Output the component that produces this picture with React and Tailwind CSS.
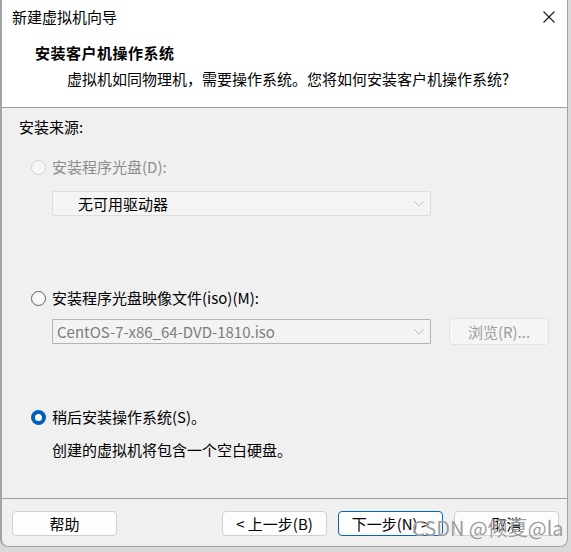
import React from 'react';

function Radio({ state }) {
  if (state === 'checked') {
    return (
      <span className="w-[15px] h-[15px] rounded-full bg-[#005fb8] flex items-center justify-center shrink-0">
        <span className="w-[7px] h-[7px] rounded-full bg-white" />
      </span>
    );
  }
  if (state === 'disabled') {
    return <span className="w-[15px] h-[15px] rounded-full border border-[#d0d0d0] bg-[#f7f7f7] shrink-0" />;
  }
  return <span className="w-[15px] h-[15px] rounded-full border border-[#5d5d5d] bg-[#f7f7f7] shrink-0" />;
}

function Chevron({ color = '#a8a8a8' }) {
  return (
    <svg width="10" height="6" viewBox="0 0 10 6" fill="none">
      <path d="M0.5 0.5 L5 5 L9.5 0.5" stroke={color} strokeWidth="1" />
    </svg>
  );
}

function Button({ children, primary }) {
  return (
    <button
      className={
        primary
          ? 'w-[105px] h-[25px] rounded-[4px] border border-[#0067c0] bg-[#fdfdfd] text-[15px] leading-[20px] text-black'
          : 'w-[105px] h-[25px] rounded-[4px] border border-[#d0d0d0] bg-[#fdfdfd] text-[15px] leading-[20px] text-black'
      }
    >
      {children}
    </button>
  );
}

export default function App() {
  return (
    <div className="relative w-[571px] h-[552px] bg-[#d9d9d9] overflow-hidden font-['Noto_Sans_CJK_SC',sans-serif]">
      <div className="w-[568px] h-[547px] flex flex-col bg-[#f0f0f0] border-l-2 border-r border-b border-[#a3a3a3] rounded-bl-[8px] rounded-br-[8px] overflow-hidden">
        {/* title bar */}
        <div className="h-[33px] bg-white flex items-center justify-between pl-[10px] pr-[12px]">
          <span className="text-[15px] leading-[20px] text-black">新建虚拟机向导</span>
          <svg width="12" height="12" viewBox="0 0 12 12" fill="none">
            <path d="M0.5 0.5 L11.5 11.5 M11.5 0.5 L0.5 11.5" stroke="#1a1a1a" strokeWidth="1.1" />
          </svg>
        </div>

        {/* header */}
        <div className="bg-white pt-[10px] pb-[18px] border-b border-[#a0a0a0] flex flex-col gap-[6px]">
          <div className="pl-[33px] text-[15px] leading-[20px] font-bold text-black tracking-[0.5px]">安装客户机操作系统</div>
          <div className="pl-[65px] text-[15px] leading-[20px] text-black">
            虚拟机如同物理机，需要操作系统。您将如何安装客户机操作系统?
          </div>
        </div>

        {/* body */}
        <div className="flex-1 flex flex-col pt-[9px] text-[15px] leading-[20px]">
          <div className="pl-[17px] text-black">安装来源:</div>

          <div className="mt-[20px] pl-[29px] flex items-center gap-[6px] text-[#8c8c8c]">
            <Radio state="disabled" />
            <span>安装程序光盘(D):</span>
          </div>
          <div className="mt-[14px] ml-[50px] w-[379px] h-[25px] border border-[#dedede] bg-[#f4f4f4] rounded-[2px] flex items-center justify-between pl-[25px] pr-[6px]">
            <span className="text-black">无可用驱动器</span>
            <Chevron color="#c0c0c0" />
          </div>

          <div className="mt-[72px] pl-[29px] flex items-center gap-[6px] text-black">
            <Radio state="off" />
            <span>安装程序光盘映像文件(iso)(M):</span>
          </div>
          <div className="mt-[10px] ml-[50px] flex items-center gap-[18px]">
            <div className="w-[379px] h-[25px] border border-[#b4b4b4] bg-[#f3f3f3] rounded-[1px] flex items-center justify-between pl-[4px] pr-[6px]">
              <span className="text-[#7c7c7c]">CentOS-7-x86_64-DVD-1810.iso</span>
              <Chevron color="#b8b8b8" />
            </div>
            <div className="w-[100px] h-[27px] border border-[#e2e2e2] bg-[#f5f5f5] rounded-[4px] flex items-center justify-center text-[#9c9c9c]">
              浏览(R)...
            </div>
          </div>

          <div className="mt-[62px] pl-[29px] flex items-center gap-[6px] text-black">
            <Radio state="checked" />
            <span>稍后安装操作系统(S)。</span>
          </div>
          <div className="mt-[13px] pl-[50px] text-black">创建的虚拟机将包含一个空白硬盘。</div>
        </div>

        {/* footer */}
        <div className="border-t border-[#a0a0a0] pt-[12px] pb-[10px] pl-[10px] pr-[8px] flex items-center">
          <Button>帮助</Button>
          <div className="flex-1" />
          <div className="flex gap-[11px]">
            <Button>&lt; 上一步(B)</Button>
            <Button primary>下一步(N) &gt;</Button>
            <Button>取消</Button>
          </div>
        </div>
      </div>

      {/* watermark */}
      <div className="absolute left-[412px] top-[515px] text-[20px] leading-[26px] text-[#7a7a7a]/75 [text-shadow:0_0_1px_#ffffff]">
        CSDN @倾夏@la
      </div>
    </div>
  );
}
